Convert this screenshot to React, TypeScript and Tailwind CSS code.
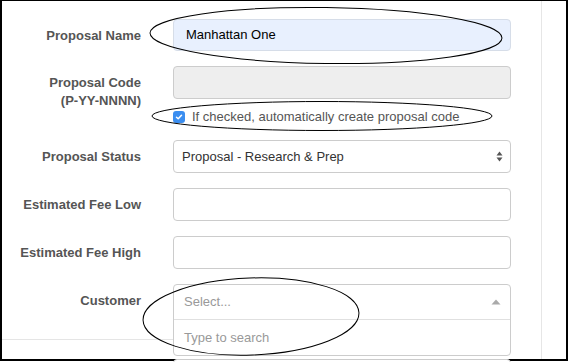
import React from "react";

const font = { fontFamily: '"Liberation Sans", Arial, Helvetica, sans-serif' };

function Label({ children }: { children: React.ReactNode }) {
  return (
    <div className="w-[139px] shrink-0 pt-[8px] text-right text-[13px] font-bold leading-[18px] text-[#555]">
      {children}
    </div>
  );
}

function Row({ label, children, className = "" }: { label: React.ReactNode; children: React.ReactNode; className?: string }) {
  return (
    <div className={"flex gap-[32px] " + className}>
      <Label>{label}</Label>
      <div className="w-[338px]">{children}</div>
    </div>
  );
}

export default function App() {
  return (
    <div
      className="relative h-[362px] w-[569px] overflow-hidden bg-white"
      style={font}
    >
      <div className="flex h-[361px] w-[568px] border-l-2 border-r-2 border-t border-b-2 border-black">
        <div className="relative w-[539px] shrink-0">
          <div className="absolute left-0 top-[338px] h-px w-[175px] bg-[#e5e5e5]" />
          <div className="relative flex flex-col pt-[18px]">
            <Row label="Proposal Name">
              <div className="flex h-[32px] items-center rounded-[4px] border border-[#d6dde8] bg-[#e8f0fe] pl-[12px] text-[13px] text-black">
                Manhattan One
              </div>
            </Row>
            <Row label={<>Proposal Code<br />(P-YY-NNNN)</>} className="mt-[15px]">
              <div className="h-[33px] rounded-[4px] border border-[#ccc] bg-[#eee]" />
              <div className="mt-[11px] flex items-center gap-[7px]">
                <span className="flex h-[12px] w-[12px] items-center justify-center rounded-[3px] bg-[#3b8ef0]">
                  <svg width="8" height="8" viewBox="0 0 8 8">
                    <path d="M1.5 4.2 L3.2 5.8 L6.5 2.2" stroke="white" strokeWidth="1.5" fill="none" strokeLinecap="round" strokeLinejoin="round" />
                  </svg>
                </span>
                <span className="text-[13px] leading-[14px] text-[#555]">If checked, automatically create proposal code</span>
              </div>
            </Row>
            <Row label="Proposal Status" className="mt-[16px]">
              <div className="flex h-[33px] items-center justify-between rounded-[4px] border border-[#ccc] bg-white pl-[8px] pr-[7px] text-[13px] text-[#333]">
                <span>Proposal - Research &amp; Prep</span>
                <svg width="7" height="11" viewBox="0 0 7 11">
                  <path d="M3.5 0.5 L6.5 4.5 L0.5 4.5 Z" fill="#555" />
                  <path d="M3.5 10.5 L6.5 6.5 L0.5 6.5 Z" fill="#555" />
                </svg>
              </div>
            </Row>
            <Row label="Estimated Fee Low" className="mt-[15px]">
              <div className="h-[33px] rounded-[4px] border border-[#ccc] bg-white" />
            </Row>
            <Row label="Estimated Fee High" className="mt-[15px]">
              <div className="h-[33px] rounded-[4px] border border-[#ccc] bg-white" />
            </Row>
            <Row label="Customer" className="mt-[15px]">
              <div className="rounded-[4px] border border-[#ccc] bg-white text-[13px] text-[#999]">
                <div className="flex h-[35px] items-center justify-between border-b border-[#e0e0e0] pl-[10px] pr-[9px]">
                  <span>Select...</span>
                  <svg width="10" height="6" viewBox="0 0 10 6">
                    <path d="M5 0.5 L9.5 5.5 L0.5 5.5 Z" fill="#aaa" />
                  </svg>
                </div>
                <div className="flex h-[35px] items-center pl-[10px]">Type to search</div>
              </div>
              <div className="mt-[3px] h-[20px] rounded-[4px] border border-[#ccc] bg-white" />
            </Row>
          </div>
        </div>
        <div className="h-full w-[27px] border-l border-[#e6e6e6]" />
      </div>
      <svg className="pointer-events-none absolute left-0 top-0" width="569" height="362" viewBox="0 0 569 362">
        <ellipse cx="326" cy="35.5" rx="176" ry="28" transform="rotate(0.8 326 35.5)" fill="none" stroke="black" strokeWidth="1" />
        <ellipse cx="322" cy="116" rx="170" ry="14.5" fill="none" stroke="black" strokeWidth="1" />
        <ellipse cx="251" cy="316.5" rx="108" ry="38.5" transform="rotate(-2 251 316.5)" fill="none" stroke="black" strokeWidth="1" />
      </svg>
    </div>
  );
}
